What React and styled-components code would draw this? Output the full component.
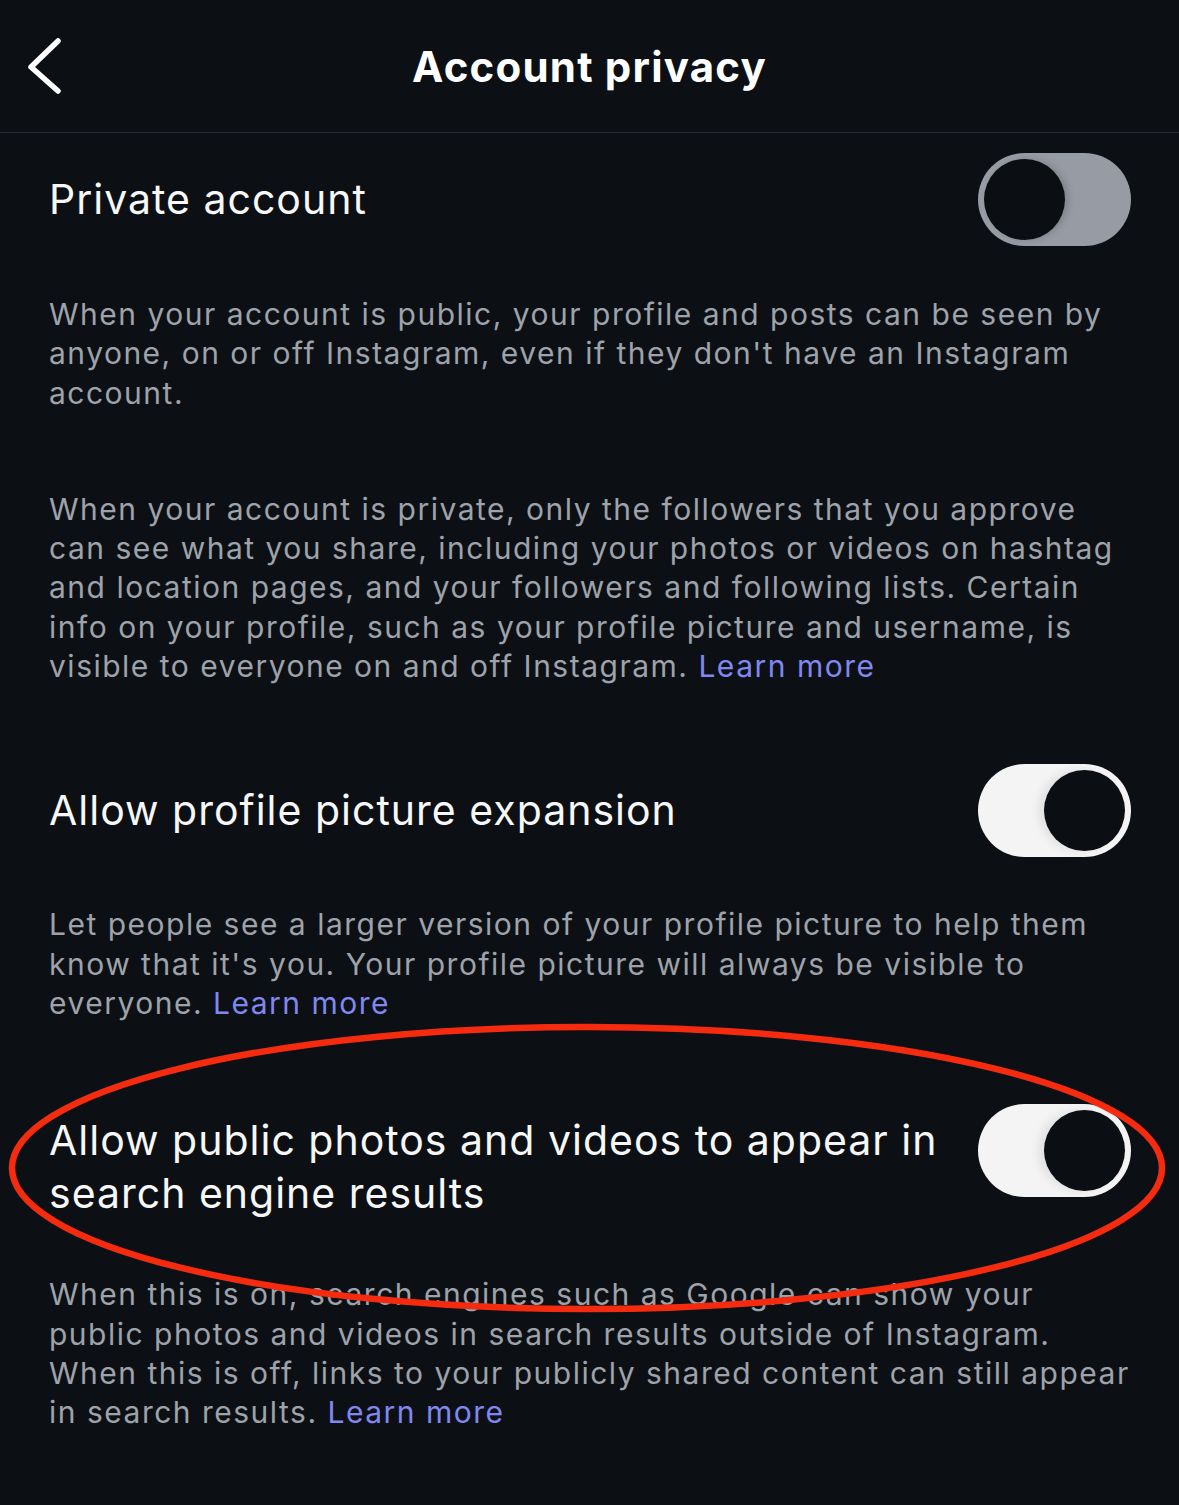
import React from 'react';
import styled, { createGlobalStyle } from 'styled-components';

const GlobalStyle = createGlobalStyle`
  html, body {
    margin: 0;
    padding: 0;
    background: #0c1014;
  }
  body {
    font-family: Inter, "Noto Sans", "Liberation Sans", sans-serif;
    -webkit-font-smoothing: antialiased;
  }
`;

const Page = styled.div`
  position: relative;
  width: 1179px;
  min-height: 1505px;
  background: #0c1014;
  color: #f5f5f5;
  overflow: hidden;
`;

const Header = styled.header`
  height: 132px;
  display: flex;
  align-items: center;
  justify-content: center;
  position: relative;
  border-bottom: 1px solid #262a30;
`;

const BackButton = styled.button`
  position: absolute;
  left: 20px;
  top: 30px;
  width: 56px;
  height: 70px;
  padding: 0;
  border: 0;
  background: none;
  cursor: pointer;
`;

const Title = styled.h1`
  margin: 0;
  font-size: 42px;
  font-weight: 700;
  letter-spacing: 1.2px;
  color: #ffffff;
`;

const Content = styled.main`
  padding: 0 49px;
`;

const Row = styled.div`
  display: flex;
  align-items: center;
  justify-content: space-between;
  gap: 30px;
  margin-top: ${(p) => p.$top}px;
`;

const RowTitle = styled.div`
  font-size: 41px;
  line-height: 53px;
  font-weight: 400;
  letter-spacing: 1px;
  color: #f7f7f7;
  max-width: 905px;
`;

const Track = styled.div`
  flex: none;
  position: relative;
  width: 153px;
  height: 93px;
  border-radius: 47px;
  background: ${(p) => (p.$on ? '#f4f4f4' : '#979ba3')};
  margin-bottom: ${(p) => p.$lift || 0}px;
  margin-right: -1px;
`;

const Knob = styled.div`
  position: absolute;
  top: 6px;
  left: ${(p) => (p.$on ? '66px' : '6px')};
  width: 81px;
  height: 81px;
  border-radius: 50%;
  background: #0b0f13;
  box-shadow: ${(p) =>
    p.$on ? '-6px 0 10px rgba(0, 0, 0, 0.08)' : '4px 0 6px rgba(0, 0, 0, 0.15)'};
`;

const Text = styled.p`
  margin: ${(p) => p.$top}px 0 0;
  font-size: 30px;
  line-height: 39.3px;
  letter-spacing: 1.5px;
  color: #9ea2aa;
`;

const Link = styled.a`
  color: #8088f0;
  text-decoration: none;
`;

const Annotation = styled.svg`
  position: absolute;
  left: 0;
  top: 0;
  pointer-events: none;
`;

const Toggle = ({ on, lift }) => (
  <Track $on={on} $lift={lift}>
    <Knob $on={on} />
  </Track>
);

export default function App() {
  return (
    <Page>
      <GlobalStyle />
      <Header>
        <BackButton aria-label="Back">
          <svg width="56" height="70" viewBox="0 0 56 70">
            <polyline
              points="38,11 11,37 38,61"
              fill="none"
              stroke="#ffffff"
              strokeWidth="5.5"
              strokeLinecap="round"
              strokeLinejoin="round"
            />
          </svg>
        </BackButton>
        <Title>Account privacy</Title>
      </Header>

      <Content>
        <Row $top={20}>
          <RowTitle>Private account</RowTitle>
          <Toggle on={false} />
        </Row>
        <Text $top={49}>
          When your account is public, your profile and posts can be seen by
          anyone, on or off Instagram, even if they don't have an Instagram
          account.
        </Text>
        <Text $top={77}>
          When your account is private, only the followers that you approve can
          see what you share, including your photos or videos on hashtag and
          location pages, and your followers and following lists. Certain info
          on your profile, such as your profile picture and username, is visible
          to everyone on and off Instagram. <Link href="#">Learn more</Link>
        </Text>

        <Row $top={78}>
          <RowTitle>Allow profile picture expansion</RowTitle>
          <Toggle on />
        </Row>
        <Text $top={48}>
          Let people see a larger version of your profile picture to help them
          know that it's you. Your profile picture will always be visible to
          everyone. <Link href="#">Learn more</Link>
        </Text>

        <Row $top={81}>
          <RowTitle>
            Allow public photos and videos to appear in search engine results
          </RowTitle>
          <Toggle on lift={32} />
        </Row>
        <Text $top={46}>
          When this is on, search engines such as Google can show your public
          photos and videos in search results outside of Instagram. When this is
          off, links to your publicly shared content can still appear in search
          results. <Link href="#">Learn more</Link>
        </Text>
      </Content>

      <Annotation width="1179" height="1505" viewBox="0 0 1179 1505">
        <ellipse
          cx="587"
          cy="1168"
          rx="575"
          ry="141"
          fill="none"
          stroke="#f52b0f"
          strokeWidth="6.5"
        />
      </Annotation>
    </Page>
  );
}
